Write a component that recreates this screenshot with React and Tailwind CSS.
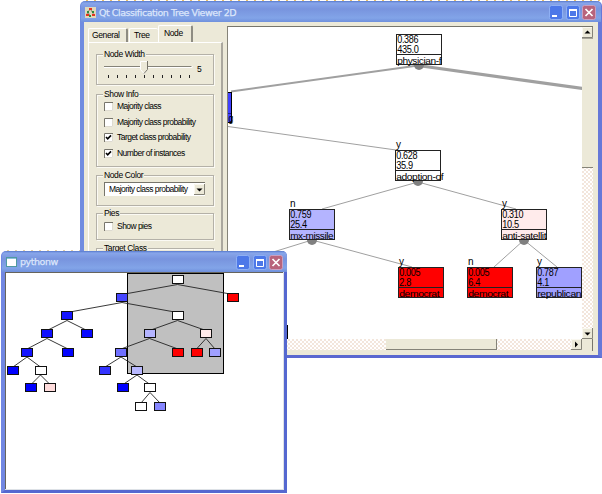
import React from "react";

const dither =
  "bg-[#f8f2ea] bg-[repeating-conic-gradient(#ffffff_0_25%,#f3e6dc_0_50%)] bg-[length:4px_4px]";

function WindowButtons() {
  return (
    <div className="flex gap-[2px]">
      <svg width="15" height="15" viewBox="0 0 15 15">
        <rect x="0.5" y="0.5" width="13" height="14" rx="2" fill="#4d78e8" stroke="#8fb0f4" />
        <rect x="3" y="10" width="5" height="2" fill="#fff" />
      </svg>
      <svg width="14" height="15" viewBox="0 0 14 15">
        <rect x="0.5" y="0.5" width="13" height="14" rx="2" fill="#4d78e8" stroke="#8fb0f4" />
        <path d="M3.5 4V11.5H10.5V4" fill="none" stroke="#fff" />
        <path d="M3 5H11" stroke="#fff" strokeWidth="2" />
      </svg>
      <svg width="14" height="15" viewBox="0 0 14 15">
        <rect x="0.5" y="0.5" width="13" height="14" rx="2" fill="#b8647c" stroke="#c9a0c0" />
        <path d="M3.5 4L10.5 11M10.5 4L3.5 11" stroke="#fff" strokeWidth="1.7" />
      </svg>
    </div>
  );
}

function Group({ title, className, children }) {
  return (
    <fieldset className={"relative w-[118px] shrink-0 border border-[#b4b1a8] shadow-[inset_1px_1px_0_#fbfaf4,1px_1px_0_#fbfaf4] " + className}>
      <span className="absolute left-[6px] top-[-6px] h-[10px] bg-[#ece9d8] px-px leading-[10px]">{title}</span>
      {children}
    </fieldset>
  );
}

function Check({ label, checked }) {
  return (
    <div className="flex h-[15.5px] items-center gap-[4px]">
      <svg width="9" height="9" viewBox="0 0 9 9">
        <rect width="9" height="9" fill="#fff" />
        <path d="M0.5 9V0.5H9" fill="none" stroke="#77756b" />
        <path d="M8.5 1V8.5H1" fill="none" stroke="#dedbd0" />
        {checked && <path d="M2 4L3.7 5.9L7 2.4" fill="none" stroke="#000" strokeWidth="1.6" />}
      </svg>
      <span className="tracking-[-0.54px]">{label}</span>
    </div>
  );
}

function Arrow({ d }) {
  return (
    <svg className="block shrink-0" width="11" height="11" viewBox="0 0 11 11">
      <rect width="11" height="11" fill="#ece9d8" />
      <path d="M0.5 10V0.5H10" fill="none" stroke="#faf8f0" />
      <path d="M10.5 0V10.5H0" fill="none" stroke="#858378" />
      <path d={d} fill="#000" />
    </svg>
  );
}

const bigNodes = [
  { x: 396, y: 34, fill: "#fff", a: "0.386", b: "435.0", c: "physician-f", w: 44, pie: true },
  { x: 395, y: 150, fill: "#fff", a: "0.628", b: "35.9", c: "adoption-of", w: 47, tag: "y", pie: true },
  { x: 289, y: 209, fill: "#b4b4ff", a: "0.759", b: "25.4", c: "mx-missile", w: 43, tag: "n", pie: true },
  { x: 501, y: 209, fill: "#ffebeb", a: "0.310", b: "10.5", c: "anti-satellit", w: 44, tag: "y", pie: true },
  { x: 398, y: 267, fill: "#ff0000", a: "0.005", b: "2.8", c: "democrat", w: 40, tag: "y" },
  { x: 467, y: 267, fill: "#ff0000", a: "0.005", b: "6.4", c: "democrat", w: 40, tag: "n" },
  { x: 536, y: 267, fill: "#a0a0ff", a: "0.787", b: "4.1", c: "republican", w: 44, tag: "y" },
];

function TreeCanvas() {
  return (
    <svg className="block shrink-0 bg-white" width="354" height="312" viewBox="228 27 354 312" fontFamily="Liberation Sans, sans-serif" fontSize="10.4">
      <g fill="none" stroke="#a0a0a0">
        <path d="M231 91.5L418 65.5" strokeWidth="2" />
        <path d="M418 65.5L583 88.5" strokeWidth="3.2" />
        <path d="M228 126.5L396 150M418 182L322 209M418 182L516 209M312 240L270 253M312 240L412 267M524 240L494 267M524 240L557 267" />
      </g>
      <rect x="220.5" y="92.5" width="11" height="30" fill="#4040ff" stroke="#000" />
      <path d="M228 113.5H231" stroke="#202090" />
      <text x="228.5" y="121.5" textLength="4.5" lengthAdjust="spacingAndGlyphs">g</text>
      <path d="M287.5 325V339" stroke="#000" />
      {bigNodes.map((n) => (
        <g key={n.x}>
          {n.pie && <ellipse cx={n.x + 23} cy={n.y + 31} rx="5" ry="5" fill="#808080" />}
          <rect x={n.x + 0.5} y={n.y + 0.5} width="45" height="30" fill={n.fill} stroke="#222" />
          <path d={`M${n.x} ${n.y + 20.5}h46`} stroke="#222" />
          {n.tag && <text x={n.x + 1} y={n.y - 1.6} fontSize="10">{n.tag}</text>}
          <text x={n.x + 1.2} y={n.y + 9.2} textLength="21" lengthAdjust="spacingAndGlyphs">{n.a}</text>
          <text x={n.x + 1.2} y={n.y + 18.9} textLength={n.b.length * 4.8 - 2.6} lengthAdjust="spacingAndGlyphs">{n.b}</text>
          <text x={n.x + 1.2} y={n.y + 29.5} fontSize="9.8" textLength={n.w} lengthAdjust="spacingAndGlyphs">{n.c}</text>
        </g>
      ))}
    </svg>
  );
}

const miniNodes = [
  [177.5, 279.5, "#fff"],
  [122, 297.5, "#4646ff", 0],
  [233, 297.5, "#ff0000", 0],
  [67, 315.5, "#1616ff", 1],
  [177.5, 315.5, "#fff", 1],
  [47, 333.5, "#1010ff", 3],
  [87, 333.5, "#0808ff", 3],
  [149.5, 333.5, "#b4b4ff", 4],
  [206, 333.5, "#ffebeb", 4],
  [27, 352, "#1414ff", 5],
  [68, 352, "#0404ff", 5],
  [121, 352, "#7070ff", 7],
  [178, 352, "#ff0000", 7],
  [196.5, 352, "#ff0000", 8],
  [215, 352, "#a0a0ff", 8],
  [13, 370, "#0000ff", 9],
  [40.5, 370, "#fff", 9],
  [105, 370, "#3434ff", 11],
  [137, 370, "#b8b8ff", 11],
  [31, 387.5, "#0000ff", 16],
  [50, 387.5, "#ffdcdc", 16],
  [123, 387.5, "#0000ff", 18],
  [150, 387.5, "#fff", 18],
  [141, 406, "#fff", 22],
  [160, 406, "#8686ff", 22],
];

function MiniTree() {
  return (
    <svg className="block bg-white" width="277" height="216" viewBox="6 273 277 216">
      <rect x="127.5" y="273.5" width="96" height="100" fill="#c0c0c0" stroke="#000" />
      {miniNodes.map(([x, y, , p], i) =>
        p === undefined ? null : (
          <path key={i} d={`M${miniNodes[p][0]} ${miniNodes[p][1] + 5}L${x} ${y - 3}`} stroke="#222" strokeWidth="0.9" />
        )
      )}
      {miniNodes.map(([x, y, f], i) => (
        <rect key={i} x={Math.round(x - 6) + 0.5} y={Math.round(y - 4.5) + 0.5} width="11" height="8" fill={f} stroke="#111" />
      ))}
    </svg>
  );
}

export default function App() {
  return (
    <div className="relative h-[494px] w-[602px] overflow-hidden bg-white font-['Liberation_Sans',sans-serif] text-[8.5px] tracking-[-0.38px] text-black">
      <section className="absolute left-[80px] top-0 flex h-[358px] w-[522px] flex-col">
        <div className="h-px bg-[repeating-linear-gradient(90deg,#fff_0_6px,#e8bd68_6px_8px)]" />
        <div className="flex h-[357px] flex-col rounded-t-[5px] border-b-[3px] border-l-[4px] border-r-[4px] border-b-[#5a68d0] border-l-[#708ce0] border-r-[#6678d8] bg-[#ece9d8]">
          <header className="-mx-[3px] flex h-[21px] shrink-0 items-center rounded-t-[5px] bg-[linear-gradient(#5578cc_0,#88a6ea_2px,#7894de_8px,#82a4e8_17px,#7090dc_21px)] pl-[4px] pr-[5px] pt-[2px]">
            <svg width="11" height="11" viewBox="0 0 11 11">
              <rect width="11" height="11" fill="#dfd8bb" />
              <path d="M5 2L2 7M6 3L9 8M3 5L5 9" stroke="#8b8670" />
              <path d="M4 1h3v2H4zM1 7h3v2H1zM7 7h3v2H7z" fill="#e4351f" />
              <path d="M2 4h2v2H2zM7 4h2v2H7zM4 8h2v2H4z" fill="#2d8a3c" />
            </svg>
            <h1 className="ml-[3px] flex-1 whitespace-nowrap font-['DejaVu_Sans',sans-serif] text-[9.5px] leading-[12px] tracking-[-0.45px] text-[#dce6fb] [-webkit-text-stroke:0.25px_#dce6fb]">
              Qt Classification Tree Viewer 2D
            </h1>
            <WindowButtons />
          </header>
          <main className="flex min-h-0 flex-1 pt-[4px]">
            <aside className="flex w-[143px] shrink-0 flex-col pl-[4px]">
              <nav className="z-10 flex h-[16px] items-end leading-[12px]">
                <span className="h-[14px] w-[40px] rounded-t-[2px] border-l border-r-2 border-t border-l-white border-r-[#8e8c82] border-t-white pl-[3px]">General</span>
                <span className="ml-px h-[14px] w-[29px] rounded-t-[2px] border-l border-t border-white pl-[4px]">Tree</span>
                <span className="h-[17px] w-[35px] rounded-t-[2px] border-l border-r-2 border-t border-l-white border-r-[#8e8c82] border-t-white bg-[#ece9d8] pl-[5px] pt-px">Node</span>
              </nav>
              <div className="flex w-[135px] flex-1 flex-col overflow-hidden border-l border-r-2 border-t border-l-white border-r-[#aaa79e] border-t-white pl-[7px] pt-[11px]">
                <Group title="Node Width" className="h-[31px]">
                  <div className="flex pl-[6px] pt-[5px]">
                    <svg width="92" height="20" viewBox="103 60 92 20">
                      <path d="M104 66.5H192" stroke="#858378" />
                      <path d="M104 67.5H192V66" fill="none" stroke="#fff" />
                      <path d="M140.500 61.500H147.500V69.500L144 73.500L140.500 69.500Z" fill="#ece9d8" stroke="#fff" />
                      <path d="M147.500 61V69.500L144 73.500" fill="none" stroke="#77756b" />
                      <path d="M108.500 75v3m9-3v3m9-3v3m9-3v3m9-3v3m9-3v3m9-3v3m9-3v3m9-3v3m9-3v3" stroke="#222" />
                    </svg>
                    <span className="ml-[2px] mt-[3px] leading-[12px]">5</span>
                  </div>
                </Group>
                <Group title="Show Info" className="mt-[9px] h-[73px] pl-[7px] pt-[4px]">
                  <Check label="Majority class" />
                  <Check label="Majority class probability" />
                  <Check label="Target class probability" checked />
                  <Check label="Number of instances" checked />
                </Group>
                <Group title="Node Color" className="mt-[8px] h-[31px] pl-[7px] pt-[6px]">
                  <div className="flex h-[14px] w-[101px] items-center justify-between border-l border-t border-[#77756b] bg-white pl-[4px]">
                    <span className="tracking-[-0.54px]">Majority class probability</span>
                    <Arrow d="M2.500 4.500h6l-3 3z" />
                  </div>
                </Group>
                <Group title="Pies" className="mt-[7px] h-[27px] pl-[7px] pt-[5px]">
                  <Check label="Show pies" />
                </Group>
                <Group title="Target Class" className="mt-[8px] h-[60px]" />
              </div>
            </aside>
            <div className="flex h-[325px] w-[366px] shrink-0 flex-col border-l border-r border-t border-l-[#858378] border-r-[#77756b] border-t-[#77756b]">
              <div className="flex h-[312px]">
                <TreeCanvas />
                <div className={"flex w-[11px] flex-col " + dither}>
                  <Arrow d="M2.500 6.500h6l-3-3z" />
                  <div className="h-[130px] border-b border-t border-b-[#858378] border-t-[#a8a599] bg-[#ece9d8]" />
                  <div className="flex-1" />
                  <Arrow d="M2.500 4.500h6l-3 3z" />
                </div>
              </div>
              <div className="flex h-[12px]">
                <div className={"flex h-[11px] w-[354px] " + dither}>
                  <div className="ml-[158px] h-[11px] w-[111px] border-b border-r border-[#858378] bg-[#ece9d8]" />
                  <div className="flex-1" />
                  <Arrow d="M4 2.500v6l3-3z" />
                </div>
                <div className="flex-1 bg-[#ece9d8]" />
              </div>
            </div>
          </main>
        </div>
      </section>

      <section className="absolute left-px top-[250px] flex h-[243px] w-[286px] flex-col">
        <div className="h-px w-[79px] bg-[repeating-linear-gradient(90deg,#fff_0_6px,#e3cda4_6px_8px)]" />
        <div className="flex h-[242px] flex-col rounded-t-[5px] border-b-[3px] border-l-[4px] border-r-[3px] border-b-[#5568d0] border-l-[#7187e2] border-r-[#5568d0] bg-[#dde1e6]">
          <header className="-mx-[3px] flex h-[21px] shrink-0 items-center rounded-t-[5px] bg-[linear-gradient(#5578cc_0,#88a6ea_2px,#7894de_8px,#82a4e8_17px,#7090dc_21px)] pl-[4px] pr-[4px] pt-px">
            <svg width="11" height="10" viewBox="0 0 11 10">
              <rect x="0.500" y="0.500" width="10" height="9" fill="#fff" stroke="#4f9aa0" />
              <path d="M1 1.500H10" stroke="#8bbedc" />
            </svg>
            <h1 className="ml-[3px] flex-1 font-['DejaVu_Sans',sans-serif] text-[9.5px] leading-[12px] tracking-[-0.45px] text-[#dce6fb] [-webkit-text-stroke:0.25px_#dce6fb]">
              pythonw
            </h1>
            <WindowButtons />
          </header>
          <div className="h-[217px] w-[278px] border-l border-t border-[#66645c]">
            <MiniTree />
          </div>
        </div>
      </section>
    </div>
  );
}
